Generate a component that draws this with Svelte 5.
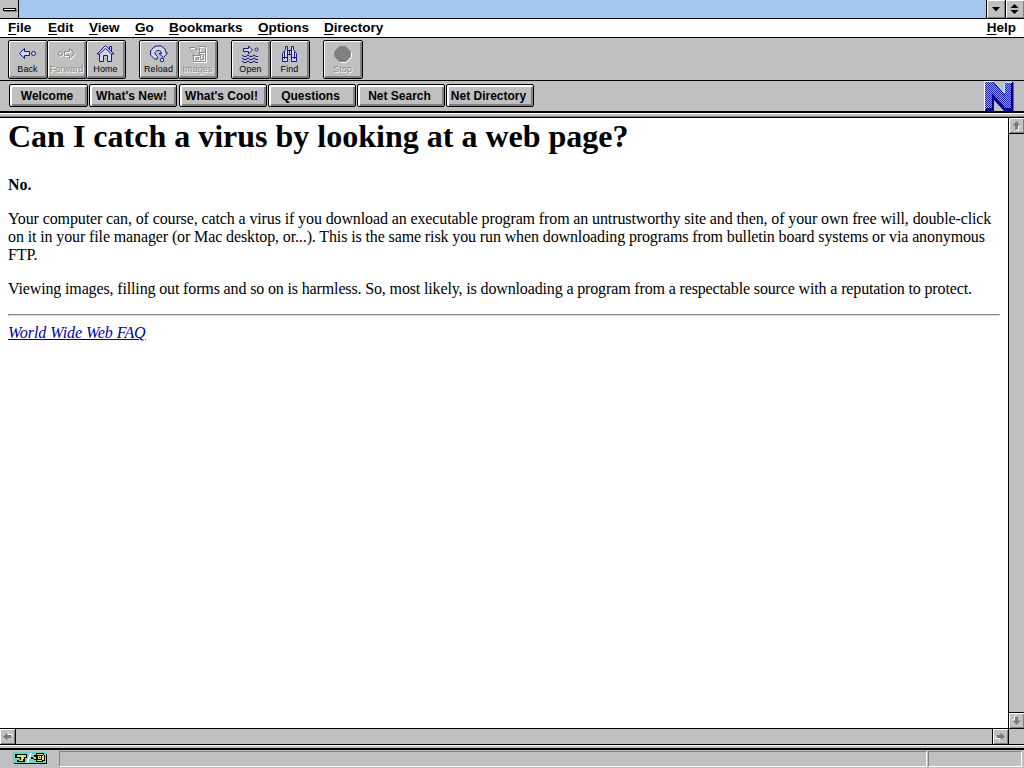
<script lang="ts">
	type Tool = { label: string; icon: string; disabled?: boolean };

	const menus = [
		{ label: 'File', width: 40 },
		{ label: 'Edit', width: 41 },
		{ label: 'View', width: 46 },
		{ label: 'Go', width: 34 },
		{ label: 'Bookmarks', width: 89 },
		{ label: 'Options', width: 66 },
		{ label: 'Directory', width: 70 }
	];

	const toolGroups: Tool[][] = [
		[
			{ label: 'Back', icon: 'back' },
			{ label: 'Forward', icon: 'forward', disabled: true },
			{ label: 'Home', icon: 'home' }
		],
		[
			{ label: 'Reload', icon: 'reload' },
			{ label: 'Images', icon: 'images', disabled: true }
		],
		[
			{ label: 'Open', icon: 'open' },
			{ label: 'Find', icon: 'find' }
		],
		[{ label: 'Stop', icon: 'stop', disabled: true }]
	];

	const directory = [
		{ label: 'Welcome', width: 79 },
		{ label: "What's New!", width: 88 },
		{ label: "What's Cool!", width: 88 },
		{ label: 'Questions', width: 88 },
		{ label: 'Net Search', width: 88 },
		{ label: 'Net Directory', width: 88 }
	];
</script>

{#snippet glyph(name: string)}
	{#if name === 'back'}
		<path d="M1.5 8.5 6.5 3.5V6.5H11.5V10.5H6.5V13.5Z" />
		<circle cx="15.5" cy="8.5" r="2" />
	{:else if name === 'forward'}
		<circle cx="3.5" cy="8.5" r="2" />
		<path d="M17.5 8.5 12.5 3.5V6.5H7.5V10.5H12.5V13.5Z" />
	{:else if name === 'home'}
		<path d="M3.5 8.5V16.5H7.5V10.5H11.5V16.5H15.5V8.5L9.5 2.5Z" />
		<path d="M1 9 9.5.5 18 9H15.5L9.5 3.5 3.5 9ZM13.5 4V1.5H15.5V6" />
	{:else if name === 'reload'}
		<path
			d="M8 14.5 5 13.5 1.5 10V6L5 2 8 1H12L16 4 17 8H18.5L14.5 12.5 10 8.5H12.5L12 6.5 10.5 5.5H8L6 7.5V9L8.5 11.5Z"
		/>
		<circle cx="13" cy="15" r="1.8" />
	{:else if name === 'images'}
		<path d="M10.5 1.5H17.5V16.5H5.5V10.5H9" />
		<path d="M1.5 2.5H6.5L9 5 11.5 3.5V10.5H4.5L6.5 8.5 3.5 6.5Z" />
		<path d="M12 7.5H17M12.5 9.5H15.5V14.5H12.5ZM8.5 12.5H10.5V14.5H8.5Z" />
	{:else if name === 'open'}
		<path d="M2.5 3.5H7.5V1L11.5 5 7.5 9V6.5H2.5Z" />
		<circle cx="15.5" cy="4.5" r="1.5" />
		<path
			class="waves"
			d="M1 10 3 11.5H5L7 10 9 11.5H11L13 10 15 11.5H17M1 13 3 14.5H5L7 13 9 14.5H11L13 13 15 14.5H17M1 16 3 17.5H5L7 16 9 17.5H11L13 16 15 17.5H17"
		/>
	{:else if name === 'find'}
		<path d="M5.5 4.5V1.5H7.5V5.5H11.5V1.5H13.5V4.5L16.5 8.5V16.5H11.5V9.5H7.5V16.5H2.5V8.5Z" />
		<path d="M4.5 7V14M7.5 5V10M9.5 6V9M11.5 5V10M14.5 7V14M2.5 12.5H7.5M11.5 12.5H16.5" />
	{:else}
		<path class="solid" d="M6.5 1.5H12.5L17.5 6.5V11.5L12.5 16.5H6.5L1.5 11.5V6.5Z" />
	{/if}
{/snippet}

{#snippet arrow(turn: number)}
	<svg class="arrow" viewBox="0 0 13 13" width="13" height="13">
		<g transform="rotate({turn} 6.5 6.5)">
			<path d="M7.5 3 11.5 7.5H9V11.5H6V7" fill="#fff" />
			<path d="M6.5 2 10.5 6.5H8V10.5H5V6.5H2.5Z" fill="#7a7a7a" />
		</g>
	</svg>
{/snippet}

<div class="window">
	<header class="title-bar">
		<div class="system"><span></span></div>
		<div class="caption"></div>
		<div class="sizer">
			<svg viewBox="0 0 18 18" width="18" height="18"><path d="M5 7H13L9 11.5Z" /></svg>
		</div>
		<div class="sizer">
			<svg viewBox="0 0 18 18" width="18" height="18"><path d="M4.5 8H12.5L8.5 4ZM4.5 10H12.5L8.5 14Z" /></svg>
		</div>
	</header>

	<nav class="menu-bar">
		{#each menus as menu}
			<span style="width: {menu.width}px"><u>{menu.label[0]}</u>{menu.label.slice(1)}</span>
		{/each}
		<span class="help"><u>H</u>elp</span>
	</nav>

	<div class="toolbar">
		{#each toolGroups as group}
			<div class="group">
				{#each group as tool}
					<button class="tool" class:disabled={tool.disabled}>
						<svg viewBox="0 0 20 19" width="20" height="19">
							{#if tool.disabled}
								<g class="shadow" transform="translate(1 1)">{@render glyph(tool.icon)}</g>
							{/if}
							<g class="ink">{@render glyph(tool.icon)}</g>
						</svg>
						<span>{tool.label}</span>
					</button>
				{/each}
			</div>
		{/each}
	</div>

	<div class="directory">
		{#each directory as item}
			<button class="place" style="width: {item.width}px">{item.label}</button>
		{/each}
		<svg class="logo" viewBox="0 0 30 30" width="30" height="30">
			<defs>
				<pattern id="dither" width="2" height="2" patternUnits="userSpaceOnUse">
					<rect width="2" height="2" fill="#2626b0" />
					<rect width="1" height="1" fill="#8c9ce0" />
					<rect x="1" y="1" width="1" height="1" fill="#8c9ce0" />
				</pattern>
			</defs>
			<path d="M0 0H30V30H0Z" fill="#c4c2bc" />
			<path d="M1 1H10L20 12V1H29.5V30H20L10 19V30H1Z" fill="#00008c" />
			<path d="M1 1H9L21 15V2H27V27H21L8 12V27H3L1 29Z" fill="url(#dither)" />
			<path d="M.5 30V.5H10" fill="none" stroke="#fff" />
			<path d="M10 .5 20.5 12.5V1.5H28" fill="none" stroke="#b4f0f4" />
		</svg>
	</div>

	<div class="divider"></div>

	<div class="view">
		<main>
			<h1>Can I catch a virus by looking at a web page?</h1>
			<p><b>No.</b></p>
			<p class="copy">
				Your computer can, of course, catch a virus if you download an executable program from an
				untrustworthy site and then, of your own free will, <span class="keep">double-click</span>
				on it in your file manager (or Mac desktop, or...). This is the same risk you run when
				downloading programs from bulletin board systems or via anonymous FTP.
			</p>
			<p class="copy">
				Viewing images, filling out forms and so on is harmless. So, most likely, is downloading a
				program from a respectable source with a reputation to protect.
			</p>
			<hr />
			<a href="#faq"><i>World Wide Web FAQ</i></a>
		</main>
		<div class="scroll vertical">
			<div class="step">{@render arrow(0)}</div>
			<div class="step">{@render arrow(180)}</div>
		</div>
	</div>

	<div class="bottom-scroll">
		<div class="scroll horizontal">
			<div class="step">{@render arrow(270)}</div>
			<div class="step">{@render arrow(90)}</div>
		</div>
		<div class="corner"></div>
	</div>

	<div class="divider thin"></div>

	<footer>
		<svg class="key" viewBox="0 0 34 12" width="34" height="12" shape-rendering="crispEdges">
			<path d="M0 0H34V12H0Z" fill="#70d0c4" />
			<path d="M2 11H33V2H34V12H1V11Z" fill="#000" />
			<path d="M2 2H14V6H12V10H4V8H7V6H2Z" fill="#000" />
			<path d="M4 3H13V5H4ZM8 5H11V7H10V9H6V8H8Z" fill="#e4dc70" />
			<path d="M13 11 17 1H19L15 11Z" fill="#fff" />
			<path d="M18 5H21V3H23V1H31V3H32V9H30V10H23V8H21V7H18Z" fill="#000" />
			<path d="M20 5H23V7H21V6H20ZM24 2H30V3H24ZM30 3H31V8H29V9H24V8H29V4H30ZM25 4H28V7H25Z" fill="#e4dc70" />
			<path d="M26 5H27V6H26Z" fill="#000" />
		</svg>
		<div class="status"></div>
		<div class="progress"></div>
	</footer>
</div>

<style>
	:global(body) {
		margin: 0;
		overflow: hidden;
	}

	.window {
		box-sizing: border-box;
		width: 1024px;
		height: 768px;
		display: flex;
		flex-direction: column;
		background: #c0c0c0;
		color: #000;
		font-family: 'Liberation Sans', Arial, sans-serif;
	}

	.window * {
		box-sizing: border-box;
	}

	svg {
		display: block;
		flex: none;
	}

	.title-bar {
		flex: none;
		display: flex;
		height: 19px;
		border-bottom: 1px solid #000;
		background: #a2c8f0;
	}

	.system {
		width: 19px;
		display: flex;
		align-items: center;
		justify-content: center;
		border-right: 1px solid #000;
		background: #c0c0c0;
	}

	.system span {
		width: 13px;
		height: 3px;
		border: 1px solid #000;
		background: #fff;
		box-shadow: 1px 1px #808080;
	}

	.caption {
		flex: 1;
	}

	.sizer {
		width: 19px;
		border-left: 1px solid #000;
		background: #c0c0c0;
		box-shadow:
			inset 1px 1px #fff,
			inset -1px -1px #808080;
	}

	.menu-bar {
		flex: none;
		display: flex;
		height: 19px;
		padding: 0 8px;
		border-bottom: 1px solid #000;
		background: #fff;
		font-size: 13.5px;
		font-weight: bold;
		line-height: 17px;
		white-space: nowrap;
	}

	.menu-bar u {
		text-underline-offset: 2px;
		text-decoration-thickness: 1px;
	}

	.help {
		margin-left: auto;
	}

	.toolbar {
		flex: none;
		display: flex;
		gap: 13px;
		height: 43px;
		padding: 2px 8px 0;
		border-bottom: 1px solid #000;
	}

	.group {
		display: flex;
	}

	.tool {
		width: 40px;
		height: 39px;
		margin: 0 0 0 -1px;
		padding: 4px 1px 0 0;
		display: flex;
		flex-direction: column;
		align-items: center;
		border: 1px solid #000;
		border-radius: 2px;
		background: #c0c0c0;
		box-shadow:
			inset 1px 1px #fff,
			inset -2px -2px #808080;
		color: #000;
		font: 9px/11px 'Liberation Sans', Arial, sans-serif;
		letter-spacing: 0.1px;
	}

	.tool:first-child {
		margin-left: 0;
	}

	.tool svg {
		margin-left: 1px;
	}

	.ink {
		fill: #d4d8ec;
		stroke: #181880;
	}

	.waves {
		fill: none;
	}

	.tool.disabled {
		color: #8a8a8a;
		text-shadow: 1px 1px #fff;
	}

	.disabled .ink {
		fill: none;
		stroke: #8a8a8a;
	}

	.shadow {
		fill: none;
		stroke: #fff;
	}

	.disabled .ink .solid {
		fill: #808080;
	}

	.directory {
		flex: none;
		display: flex;
		gap: 1px;
		height: 30px;
		padding: 3px 10px 0 9px;
	}

	.place {
		height: 23px;
		padding: 1px 3px 0 0;
		border: 1px solid #000;
		border-radius: 2px;
		background: #c0c0c0;
		box-shadow:
			inset 2px 2px #fff,
			inset -2px -2px #808080;
		color: #000;
		font: bold 12px/19px 'Liberation Sans', Arial, sans-serif;
		white-space: nowrap;
	}

	.place:nth-child(2) {
		margin-right: 1px;
	}

	.logo {
		margin: -3px 0 0 auto;
	}

	.divider {
		flex: none;
		height: 7px;
		border-top: 2px solid #000;
		border-bottom: 1px solid #000;
		background: linear-gradient(#fff 0 1px, #c0c0c0 1px 3px, #808080 3px);
	}

	.view {
		flex: 1;
		min-height: 0;
		display: flex;
	}

	main {
		flex: 1;
		padding: 0 8px;
		background: #fff;
		font: 16px/18px 'Liberation Serif', 'Times New Roman', serif;
	}

	h1 {
		margin: 0 0 21px;
		font-size: 32px;
		line-height: 37px;
	}

	p {
		margin: 0 0 16px;
	}

	/* Body copy is set slightly tight */
	.copy {
		letter-spacing: -0.117px;
	}

	.copy + .copy {
		letter-spacing: -0.14px;
	}

	.keep {
		white-space: nowrap;
	}

	hr {
		margin: 0 0 8px;
		border: 1px solid;
		border-color: #808080 #e0e0e0 #e0e0e0 #808080;
	}

	a {
		color: #0000a0;
		letter-spacing: -0.05px;
	}

	.scroll {
		display: flex;
		justify-content: space-between;
		background: #c0c0c0;
	}

	.vertical {
		width: 16px;
		flex-direction: column;
		border-left: 1px solid #000;
	}

	.step {
		width: 15px;
		height: 15px;
		padding: 1px;
		box-shadow:
			inset 1px 1px #fff,
			inset -1px -1px #808080;
	}

	.vertical .step {
		height: 16px;
	}

	.vertical .step:first-child {
		border-bottom: 1px solid #000;
	}

	.vertical .step:last-child {
		border-top: 1px solid #000;
	}

	.bottom-scroll {
		flex: none;
		display: flex;
		height: 17px;
		border-top: 1px solid #000;
		border-bottom: 1px solid #000;
	}

	.horizontal {
		width: 1009px;
		border-right: 1px solid #000;
	}

	.horizontal .step {
		width: 16px;
	}

	.horizontal .step:first-child {
		border-right: 1px solid #000;
	}

	.horizontal .step:last-child {
		border-left: 1px solid #000;
	}

	.thin {
		height: 5px;
		border-top: 0;
		border-bottom-width: 2px;
		background: linear-gradient(#fff 0 1px, #c0c0c0 1px);
	}

	footer {
		flex: none;
		display: flex;
		height: 18px;
		padding: 1px 1px 0 13px;
	}

	.key {
		margin-top: 1px;
	}

	.status,
	.progress {
		height: 16px;
		border: 1px solid;
		border-color: #808080 #fff #fff #808080;
	}

	.status {
		width: 868px;
		margin-left: 12px;
	}

	.progress {
		width: 94px;
		margin-left: 1px;
	}
</style>
